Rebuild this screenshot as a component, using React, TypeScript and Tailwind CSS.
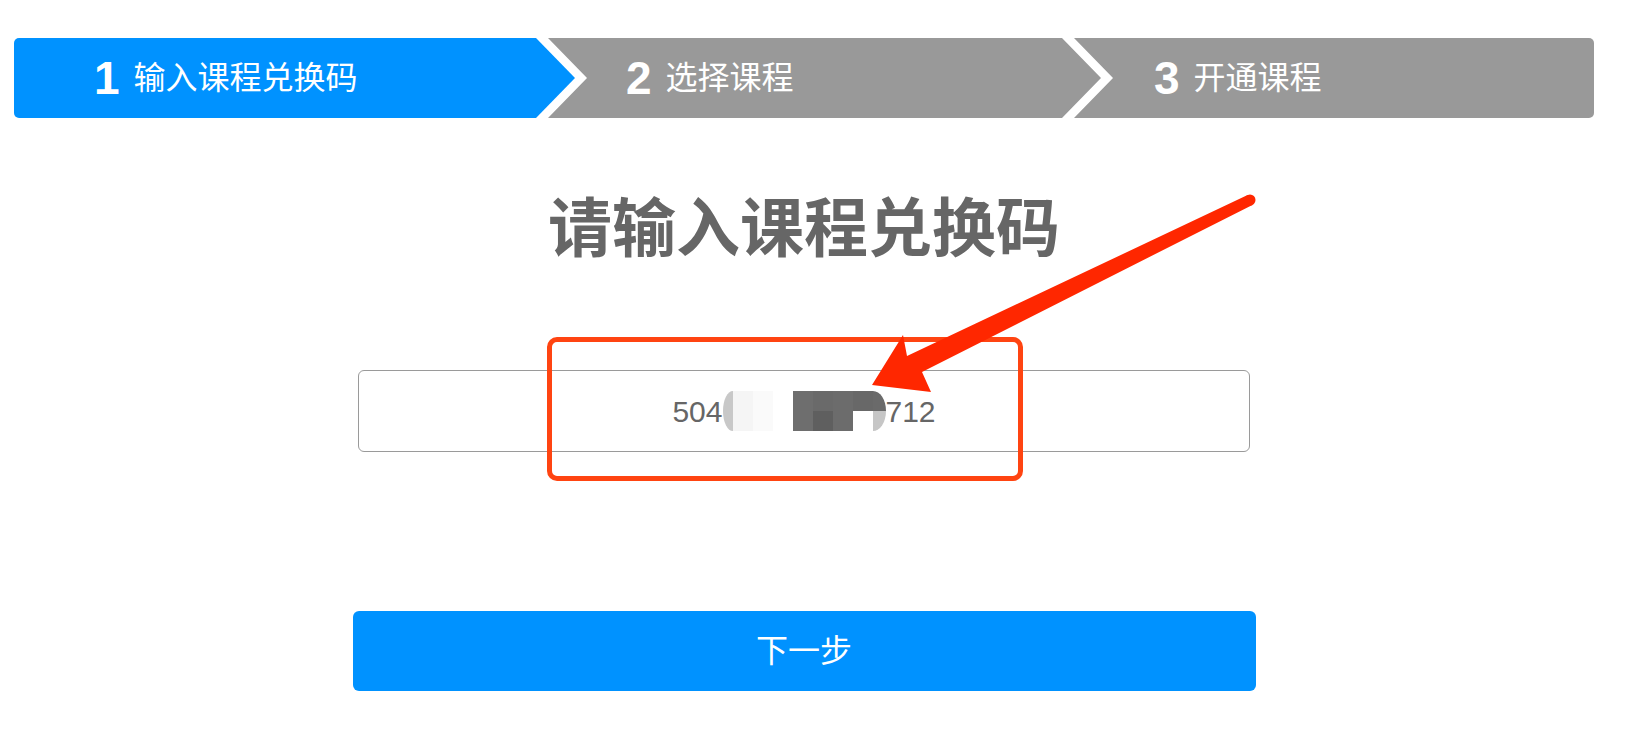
const steps = [
  { n: "1", label: "输入课程兑换码", active: true },
  { n: "2", label: "选择课程", active: false },
  { n: "3", label: "开通课程", active: false },
];

function StepBar() {
  return (
    <div className="flex w-full h-[80px]">
      <div className="w-[561px] h-full shrink-0 bg-[#0092ff] rounded-l-[5px] [clip-path:polygon(0_0,calc(100%_-_39px)_0,100%_50%,calc(100%_-_39px)_100%,0_100%)] flex items-center pl-[80px] text-white">
        <span className="text-[46px] font-bold leading-none">{steps[0].n}</span>
        <span className="ml-[14px] text-[32px] leading-none">{steps[0].label}</span>
      </div>
      <div className="w-[553px] h-full shrink-0 -ml-[27px] bg-[#999999] [clip-path:polygon(0_0,calc(100%_-_39px)_0,100%_50%,calc(100%_-_39px)_100%,0_100%,39px_50%)] flex items-center pl-[78px] text-white">
        <span className="text-[46px] font-bold leading-none">{steps[1].n}</span>
        <span className="ml-[14px] text-[32px] leading-none">{steps[1].label}</span>
      </div>
      <div className="flex-1 h-full -ml-[27px] bg-[#999999] rounded-r-[5px] [clip-path:polygon(0_0,100%_0,100%_100%,0_100%,39px_50%)] flex items-center pl-[80px] text-white">
        <span className="text-[46px] font-bold leading-none">{steps[2].n}</span>
        <span className="ml-[14px] text-[32px] leading-none">{steps[2].label}</span>
      </div>
    </div>
  );
}

// blurred middle part of the code
function Mosaic() {
  return (
    <div className="flex h-[40px]">
      <div className="w-[10px] bg-[#c8c8c8] rounded-l-[10px_20px]" />
      <div className="w-[20px] bg-[#f5f5f5]" />
      <div className="w-[20px] bg-[#fafafa]" />
      <div className="w-[20px] bg-white" />
      <div className="w-[20px] bg-[#6e6e6e]" />
      <div className="w-[20px] flex flex-col">
        <div className="h-1/2 bg-[#6a6a6a]" />
        <div className="h-1/2 bg-[#5f5f5f]" />
      </div>
      <div className="w-[20px] bg-[#6c6c6c]" />
      <div className="w-[20px] flex flex-col">
        <div className="h-1/2 bg-[#686868]" />
        <div className="h-1/2 bg-white" />
      </div>
      <div className="w-[13px] flex flex-col rounded-r-[13px_20px] overflow-hidden">
        <div className="h-1/2 bg-[#6a6a6a]" />
        <div className="h-1/2 bg-[#c6c6c6]" />
      </div>
    </div>
  );
}

export default function App() {
  return (
    <div className="relative w-[1640px] h-[732px] bg-white overflow-hidden font-['Liberation_Sans','Noto_Sans_CJK_SC',sans-serif]">
      <div className="ml-[14px] w-[1580px] pt-[38px] flex flex-col items-center">
        <StepBar />

        <h1 className="mt-[79px] text-[64px] leading-none font-bold text-[#666666]">请输入课程兑换码</h1>

        <div className="mt-[109px] w-[892px] h-[82px] border-[1.5px] border-[#9a9a9a] rounded-[6px] flex items-center justify-center text-[30px] text-[#666666]">
          <span>504</span>
          <Mosaic />
          <span>712</span>
        </div>

        <button className="mt-[159px] w-[903px] h-[80px] rounded-[6px] bg-[#0092ff] text-white text-[32px]">
          下一步
        </button>
      </div>

      {/* annotation */}
      <div className="absolute left-[547px] top-[337px] w-[476px] h-[144px] border-[5px] border-[#ff4411] rounded-[10px]" />
      <svg className="absolute inset-0 w-full h-full pointer-events-none" viewBox="0 0 1640 732">
        <polygon
          fill="#ff2700"
          points="872,385 903,335 907,356 1247.6,195.1 1252.4,204.9 922,372 931,392"
        />
        <circle cx="1250" cy="200" r="5.5" fill="#ff2700" />
      </svg>
    </div>
  );
}
